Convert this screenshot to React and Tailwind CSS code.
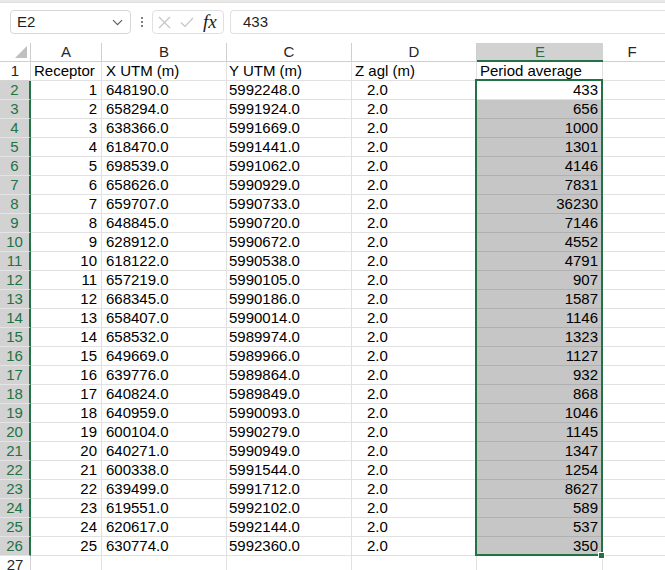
import React from 'react';

const rows = [
  [1, '648190.0', '5992248.0', 433],
  [2, '658294.0', '5991924.0', 656],
  [3, '638366.0', '5991669.0', 1000],
  [4, '618470.0', '5991441.0', 1301],
  [5, '698539.0', '5991062.0', 4146],
  [6, '658626.0', '5990929.0', 7831],
  [7, '659707.0', '5990733.0', 36230],
  [8, '648845.0', '5990720.0', 7146],
  [9, '628912.0', '5990672.0', 4552],
  [10, '618122.0', '5990538.0', 4791],
  [11, '657219.0', '5990105.0', 907],
  [12, '668345.0', '5990186.0', 1587],
  [13, '658407.0', '5990014.0', 1146],
  [14, '658532.0', '5989974.0', 1323],
  [15, '649669.0', '5989966.0', 1127],
  [16, '639776.0', '5989864.0', 932],
  [17, '640824.0', '5989849.0', 868],
  [18, '640959.0', '5990093.0', 1046],
  [19, '600104.0', '5990279.0', 1145],
  [20, '640271.0', '5990949.0', 1347],
  [21, '600338.0', '5991544.0', 1254],
  [22, '639499.0', '5991712.0', 8627],
  [23, '619551.0', '5992102.0', 589],
  [24, '620617.0', '5992144.0', 537],
  [25, '630774.0', '5992360.0', 350],
];

const cell = 'h-[19px] border-b border-r border-[#e1e1e1] leading-[18px] whitespace-nowrap overflow-hidden';

const FormulaBar = () => (
  <div className="h-[40px] flex items-start pt-[7px] pl-[10px] gap-0">
    {/* name box */}
    <div className="w-[121px] h-[24px] rounded-[4px] border border-[#d6d6d6] flex items-center justify-between pl-[6px] pr-[7px] text-[15px] text-[#1f1f1f]">
      <span>E2</span>
      <svg width="11" height="7" viewBox="0 0 11 7" fill="none" stroke="#5f5f5f" strokeWidth="1.2">
        <path d="M1 1.2l4.5 4.5L10 1.2" />
      </svg>
    </div>
    <div className="w-[21px] h-[24px] flex flex-col items-center justify-center gap-[2px]">
      <span className="w-[2px] h-[2px] bg-[#555] rounded-full" />
      <span className="w-[2px] h-[2px] bg-[#555] rounded-full" />
      <span className="w-[2px] h-[2px] bg-[#555] rounded-full" />
    </div>
    <div className="w-[72px] h-[24px] rounded-[4px] border border-[#e0e0e0] flex items-center pl-[5px] gap-[9px]">
      <svg width="13" height="13" viewBox="0 0 13 13" fill="none" stroke="#c4c4c4" strokeWidth="1.1">
        <path d="M1 1l11 11M12 1L1 12" />
      </svg>
      <svg width="14" height="11" viewBox="0 0 14 11" fill="none" stroke="#c4c4c4" strokeWidth="1.1">
        <path d="M1 5.5l4 4L13 1" />
      </svg>
      <span className="text-[19px] italic text-[#222] leading-none -mt-[2px]" style={{ fontFamily: '"Liberation Serif", serif' }}>fx</span>
    </div>
    <div className="ml-[6px] flex-1 h-[24px] rounded-l-[4px] border border-r-0 border-[#e0e0e0] flex items-center pl-[12px] text-[15px] text-[#1f1f1f]">
      433
    </div>
  </div>
);

const HeaderRow = () => (
  <div className="flex text-[15px] text-[#262626]">
    <div className="w-[31px] h-[19px] border-b border-r border-[#cfcfcf] relative">
      <svg className="absolute right-[3px] bottom-[3px]" width="12" height="12" viewBox="0 0 12 12">
        <path d="M12 0V12H0Z" fill="#bfbfbf" />
      </svg>
    </div>
    {['A', 'B', 'C', 'D'].map((c, i) => (
      <div
        key={c}
        className={`${i === 0 ? 'w-[71px]' : 'w-[125px]'} h-[19px] border-b border-r border-[#cfcfcf] text-center leading-[18px]`}
      >
        {c}
      </div>
    ))}
    <div className="w-[126px] h-[19px] bg-[#d2d2d2] border-b-2 border-[#217346] text-center leading-[18px] text-[#217346]">E</div>
    <div className="flex-1 h-[19px] border-b border-[#cfcfcf] text-center leading-[18px] pr-[4px]">F</div>
  </div>
);

export default function App() {
  return (
    <div
      className="w-[665px] h-[570px] overflow-hidden bg-white text-black"
      style={{ fontFamily: '"Liberation Sans", Arial, sans-serif' }}
    >
      <div className="h-[3px] bg-[#e9e9e9] border-b border-[#dedede]" />
      <FormulaBar />

      <div className="relative">
        <HeaderRow />

        {/* row 1 */}
        <div className="flex text-[15px]">
          <div className="w-[31px] h-[19px] border-b border-r border-[#d4d4d4] text-center leading-[18px] text-[#262626]">1</div>
          <div className={`w-[71px] pl-[3px] ${cell}`}>Receptor</div>
          <div className={`w-[125px] pl-[4px] ${cell}`}>X UTM (m)</div>
          <div className={`w-[125px] pl-[2px] ${cell}`}>Y UTM (m)</div>
          <div className={`w-[125px] pl-[3px] ${cell}`}>Z agl (m)</div>
          <div className={`w-[126px] pl-[3px] ${cell}`}>Period average</div>
          <div className={`flex-1 ${cell} border-r-0`} />
        </div>

        {rows.map(([n, x, y, avg], i) => (
          <div key={n} className="flex text-[15px]">
            <div className="w-[31px] h-[19px] bg-[#d2d2d2] border-b border-[#e4e4e4] border-r-2 border-r-[#217346] text-center leading-[18px] text-[#217346]">
              {i + 2}
            </div>
            <div className={`w-[71px] pr-[4px] text-right ${cell}`}>{n}</div>
            <div className={`w-[125px] pl-[4px] ${cell}`}>{x}</div>
            <div className={`w-[125px] pl-[2px] ${cell}`}>{y}</div>
            <div className={`w-[125px] pl-[15px] ${cell}`}>2.0</div>
            <div
              className={
                i === 0
                  ? `w-[126px] pr-[4px] text-right ${cell}`
                  : `w-[126px] pr-[4px] text-right h-[19px] leading-[18px] bg-[#c6c6c6] border-b border-r border-[#b0b0b0]`
              }
            >
              {avg}
            </div>
            <div className={`flex-1 ${cell} border-r-0`} />
          </div>
        ))}

        {/* row 27 */}
        <div className="flex text-[15px]">
          <div className="w-[31px] h-[19px] border-b border-r border-[#d4d4d4] text-center leading-[18px] text-[#262626]">27</div>
          <div className={`w-[71px] ${cell}`} />
          <div className={`w-[125px] ${cell}`} />
          <div className={`w-[125px] ${cell}`} />
          <div className={`w-[125px] ${cell}`} />
          <div className={`w-[126px] ${cell}`} />
          <div className={`flex-1 ${cell} border-r-0`} />
        </div>

        {/* selection outline E2:E26 */}
        <div className="absolute left-[475px] top-[36px] w-[128px] h-[477px] border-2 border-[#217346] pointer-events-none" />
        <div className="absolute left-[598px] top-[509px] w-[7px] h-[7px] bg-[#217346] border border-white" />
      </div>
    </div>
  );
}
